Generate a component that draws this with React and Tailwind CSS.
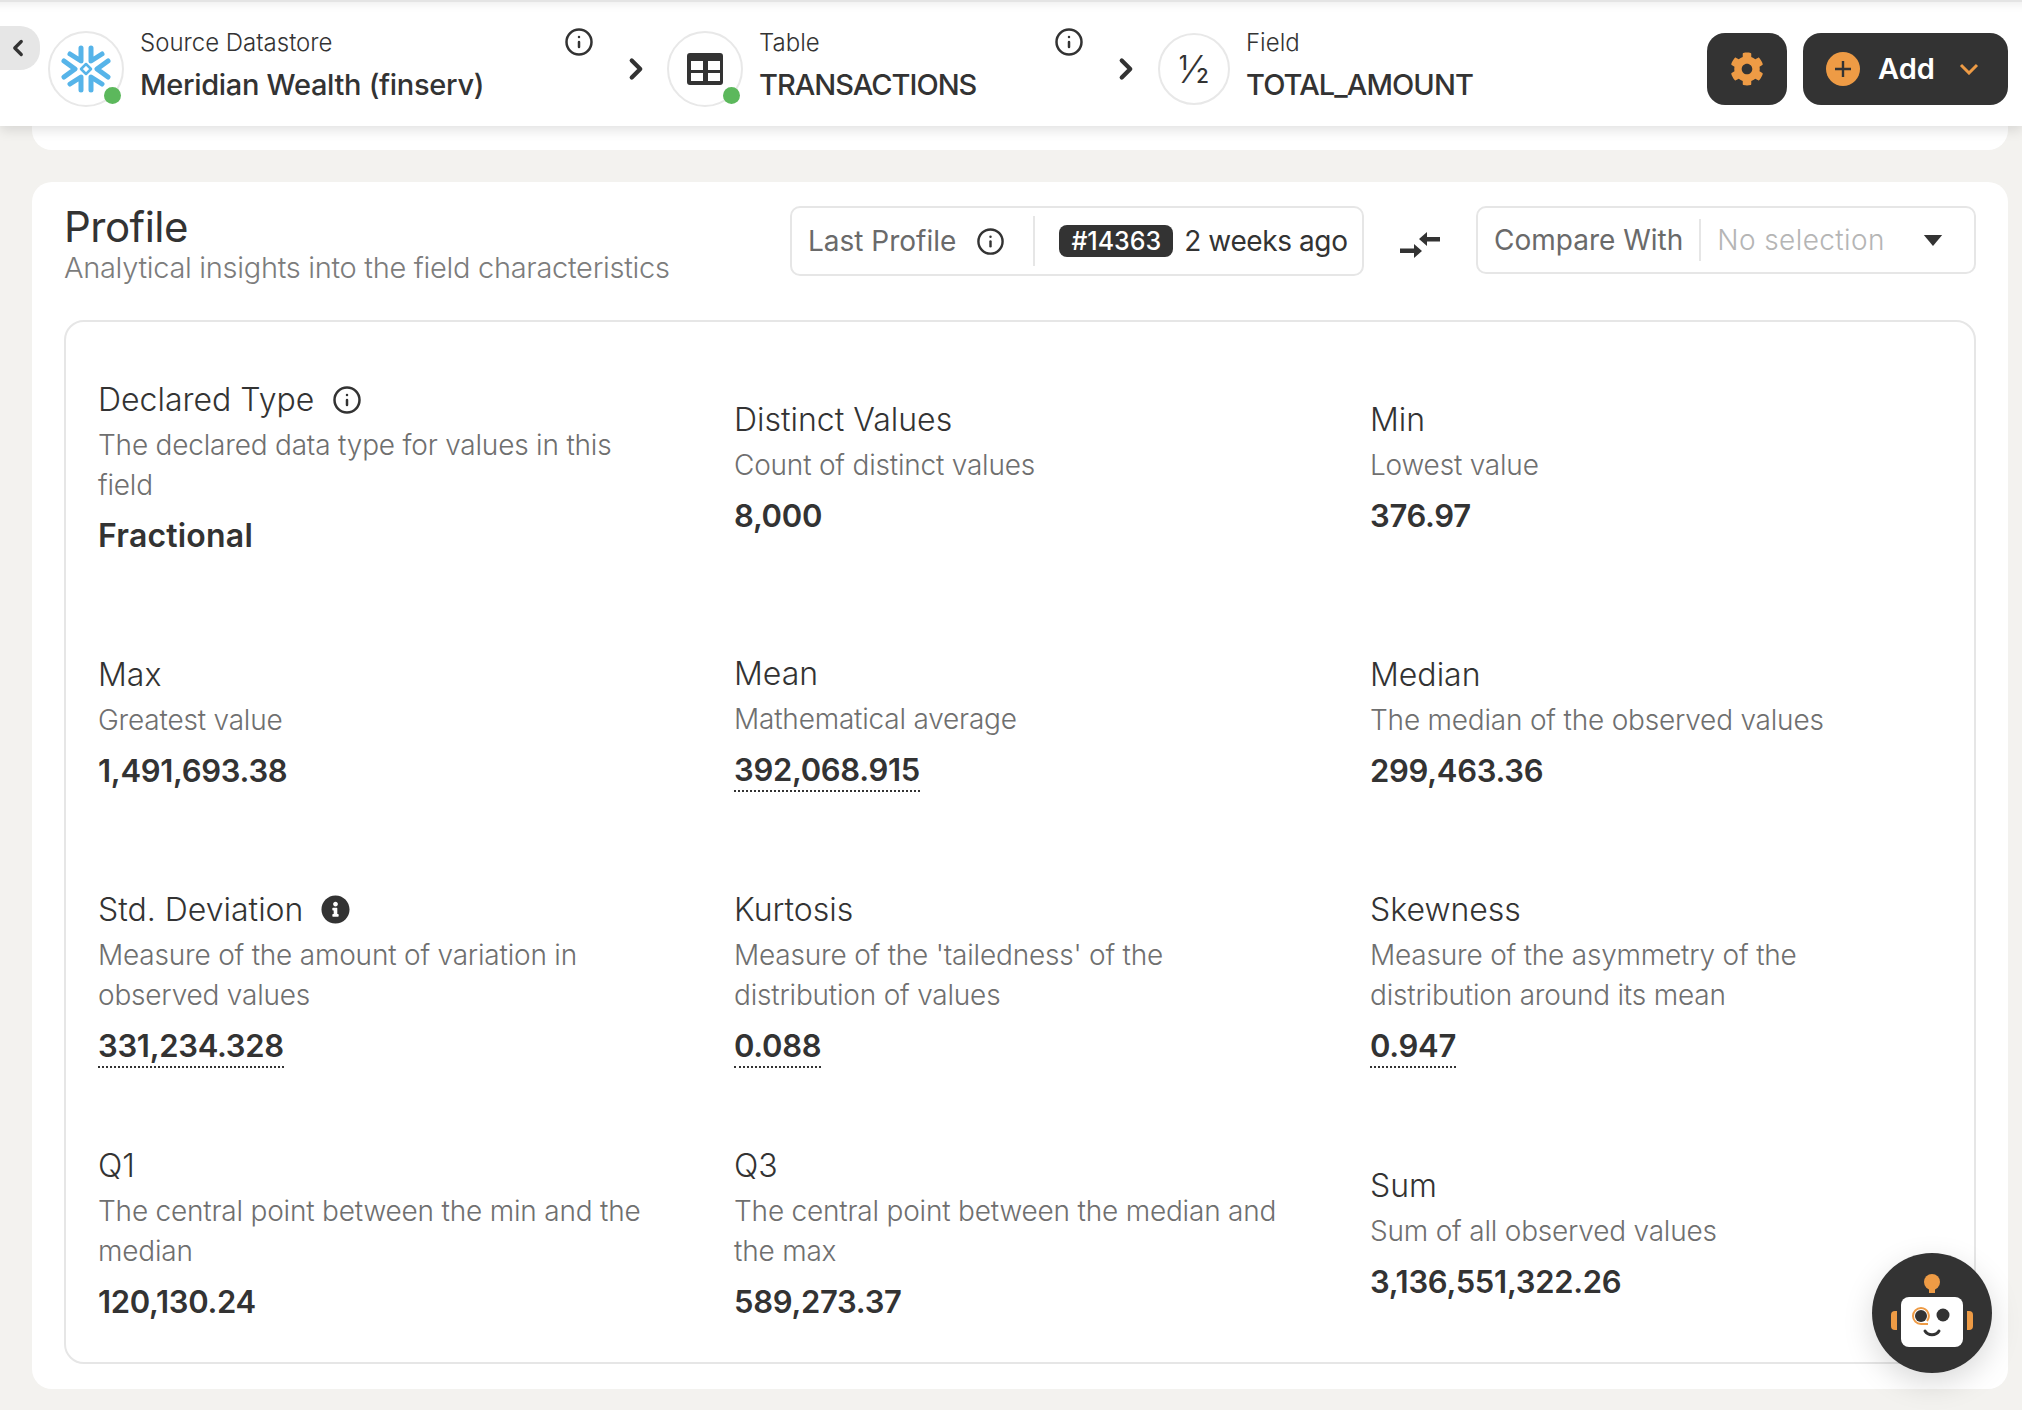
import { ChevronLeft, ChevronRight, Info } from 'lucide-react';
import { FaCog, FaInfoCircle } from 'react-icons/fa';

const FONT = "font-['Inter',sans-serif]";

const METRICS = [
  { label: 'Declared Type', desc: 'The declared data type for values in this field', value: 'Fractional', icon: 'outline', valueTone: 'text-[32px] tracking-[0.2px]' },
  { label: 'Distinct Values', desc: 'Count of distinct values', value: '8,000' },
  { label: 'Min', desc: 'Lowest value', value: '376.97' },
  { label: 'Max', desc: 'Greatest value', value: '1,491,693.38' },
  { label: 'Mean', desc: 'Mathematical average', value: '392,068.915', dotted: true },
  { label: 'Median', desc: 'The median of the observed values', value: '299,463.36' },
  { label: 'Std. Deviation', desc: 'Measure of the amount of variation in observed values', value: '331,234.328', icon: 'solid', dotted: true },
  { label: 'Kurtosis', desc: "Measure of the 'tailedness' of the distribution of values", value: '0.088', dotted: true },
  { label: 'Skewness', desc: 'Measure of the asymmetry of the distribution around its mean', value: '0.947', dotted: true },
  { label: 'Q1', desc: 'The central point between the min and the median', value: '120,130.24' },
  { label: 'Q3', desc: 'The central point between the median and the max', value: '589,273.37' },
  { label: 'Sum', desc: 'Sum of all observed values', value: '3,136,551,322.26' },
];

const SnowflakeIcon = () => (
  <svg viewBox="-25 -25 50 50" className="h-[50px] w-[50px]" fill="none" stroke="#56b4e9" strokeWidth="5" strokeLinecap="round" strokeLinejoin="round">
    <path d="M-5-21V-8L-16-15" />
    <path d="M5-21V-8L16-15" />
    <path d="M-5 21V8L-16 15" />
    <path d="M5 21V8L16 15" />
    <path d="M-22-8L-11 0L-22 8" />
    <path d="M22-8L11 0L22 8" />
    <path d="M0-5L5 0L0 5L-5 0Z" strokeWidth="2.5" />
  </svg>
);

const TableIcon = () => (
  <svg viewBox="0 0 36 32" className="h-[32px] w-[36px]" fill="#333">
    <path fillRule="evenodd" d="M3 0h30a3 3 0 0 1 3 3v26a3 3 0 0 1-3 3H3a3 3 0 0 1-3-3V3a3 3 0 0 1 3-3z M4 8v9h12V8z M21 8v9h12V8z M4 20v8h12v-8z M21 20v8h12v-8z" />
  </svg>
);

const CompareIcon = () => (
  <svg viewBox="0 0 40 26" className="h-[26px] w-[40px]" fill="#333">
    <path d="M19 7l8-7v5h13v4.500H27V14z" />
    <path d="M22 19l-8 7v-5H0v-4.500h14V12z" />
  </svg>
);

const PlusCircle = () => (
  <svg viewBox="0 0 34 34" className="h-[34px] w-[34px]">
    <circle cx="17" cy="17" r="17" fill="#ee9b45" />
    <path d="M17 9v16M9 17h16" stroke="#333" strokeWidth="2.4" />
  </svg>
);

const RobotIcon = () => (
  <svg viewBox="0 0 120 120" className="h-[120px] w-[120px]">
    <circle cx="60" cy="60" r="60" fill="#333" />
    <circle cx="60" cy="29" r="8" fill="#ee9b45" />
    <rect x="57" y="32" width="6" height="8" fill="#ee9b45" />
    <rect x="29" y="44" width="62" height="50" rx="8" fill="#fff" />
    <path d="M25 58h-2a4 4 0 0 0-4 4v11a4 4 0 0 0 4 4h2z" fill="#ee9b45" />
    <path d="M95 58h2a4 4 0 0 1 4 4v11a4 4 0 0 1-4 4h-2z" fill="#ee9b45" />
    <path d="M49 55a8 8 0 0 0 0 16h7" fill="none" stroke="#ee9b45" strokeWidth="2" />
    <path d="M49 55a8 8 0 0 1 6 13" fill="none" stroke="#ee9b45" strokeWidth="2" />
    <circle cx="49" cy="63" r="6" fill="#333" />
    <circle cx="71" cy="62" r="6.500" fill="#333" />
    <path d="M53 78c3 5 11 5 14 0" fill="none" stroke="#333" strokeWidth="3" strokeLinecap="round" />
  </svg>
);

const Crumb = ({ icon, label, value, width, online, info, size = 'h-[76px] w-[76px]', gap = 'ml-[16px]', valueTone = '' }) => (
  <div className="flex items-center">
    <div className={`relative flex shrink-0 items-center justify-center rounded-full border-2 border-[#e8e8e8] bg-white ${size}`}>
      {icon}
      {online && <span className="absolute bottom-[1px] right-[1px] h-[17px] w-[17px] rounded-full bg-[#5cb85c]" />}
    </div>
    <div className={`mb-[8px] flex flex-col ${gap} ${width}`}>
      <div className="flex items-start justify-between">
        <span className="text-[24px] leading-[32px] font-light text-[#333]">{label}</span>
        {info && <Info className="mr-[-2px] h-[30px] w-[30px] text-[#333]" strokeWidth={2} />}
      </div>
      <span className={`mt-[7px] text-[29px] leading-[38px] font-medium text-[#333] ${valueTone}`}>{value}</span>
    </div>
  </div>
);

const Metric = ({ label, desc, value, icon, dotted, valueTone = 'text-[31px] tracking-[-0.3px]' }) => (
  <div className="flex flex-col justify-center">
    <div className="flex items-center gap-[18px]">
      <span className="text-[32px] leading-[40px] font-light text-[#333]">{label}</span>
      {icon === 'outline' && <Info className="h-[30px] w-[30px] text-[#333]" strokeWidth={2} />}
      {icon === 'solid' && <FaInfoCircle className="h-[29px] w-[29px] text-[#333]" />}
    </div>
    <p className="mt-[5px] w-[546px] text-[28px] leading-[40px] font-light tracking-[-0.2px] text-[#6f6f6f]">{desc}</p>
    <div className="mt-[11px] flex">
      <span className={`leading-[40px] font-semibold text-[#333] ${valueTone} ${dotted ? 'border-b-2 border-dotted border-[#333]' : ''}`}>{value}</span>
    </div>
  </div>
);

export default function App() {
  return (
    <div className={`${FONT} relative h-[1410px] w-full overflow-hidden bg-[#f3f2ef]`}>
      <header className="relative z-10 flex h-[126px] items-center border-t-2 border-[#e4e4e4] bg-white pt-[10px] pr-[14px] shadow-[0_4px_12px_rgba(0,0,0,0.12),inset_0_12px_10px_-10px_rgba(0,0,0,0.08)]">
        <button className="mb-[42px] flex h-[44px] w-[40px] shrink-0 items-center justify-center rounded-r-[20px] bg-[#e6e6e6] pr-[4px]">
          <ChevronLeft className="h-[26px] w-[26px] text-[#333]" strokeWidth={3} />
        </button>
        <div className="ml-[8px] flex items-center">
          <Crumb icon={<SnowflakeIcon />} label="Source Datastore" value="Meridian Wealth (finserv)" width="w-[452px]" online info valueTone="tracking-[-0.3px]" />
          <ChevronRight className="ml-[27px] mr-[14px] h-[34px] w-[34px] text-[#333]" strokeWidth={3} />
          <Crumb icon={<TableIcon />} label="Table" value="TRANSACTIONS" width="w-[323px]" online info valueTone="tracking-[-1px]" />
          <ChevronRight className="ml-[27px] mr-[15px] h-[34px] w-[34px] text-[#333]" strokeWidth={3} />
          <Crumb icon={<span className="text-[38px] font-light text-[#333]">½</span>} label="Field" value="TOTAL_AMOUNT" width="w-[240px]" size="h-[72px] w-[72px]" gap="ml-[16px]" valueTone="tracking-[-0.9px]" />
        </div>
        <div className="ml-auto flex items-center gap-[16px]">
          <button className="flex h-[72px] w-[80px] items-center justify-center rounded-[18px] bg-[#333]">
            <FaCog className="h-[34px] w-[34px] text-[#ee9b45]" />
          </button>
          <button className="flex h-[72px] w-[205px] items-center rounded-[18px] bg-[#333] pl-[23px]">
            <PlusCircle />
            <span className="ml-[18px] text-[29px] font-semibold text-white">Add</span>
            <svg viewBox="0 0 20 12" className="ml-[24px] h-[12px] w-[20px]" fill="none" stroke="#ee9b45" strokeWidth="3"><path d="M2 2l8 8 8-8" /></svg>
          </button>
        </div>
      </header>

      <div className="mr-[14px] ml-[32px] -mt-[4px] h-[28px] rounded-b-[20px] bg-white" />

      <section className="mt-[32px] mr-[14px] ml-[32px] h-[1207px] rounded-[20px] bg-white px-[32px] pt-[23px]">
        <div className="flex h-[115px] items-start justify-between">
          <div>
            <h1 className="text-[42px] leading-[44px] font-normal tracking-[-0.5px] text-[#333]">Profile</h1>
            <p className="mt-[1px] text-[29px] leading-[36px] font-light tracking-[-0.3px] text-[#7c7c7c]">Analytical insights into the field characteristics</p>
          </div>
          <div className="mt-[1px] flex items-start">
            <div className="flex h-[70px] w-[574px] items-center rounded-[10px] border-2 border-[#e6e6e6] pl-[16px] whitespace-nowrap">
              <span className="text-[28px] text-[#6a6a6a]">Last Profile</span>
              <Info className="ml-[20px] h-[29px] w-[29px] shrink-0 text-[#333]" strokeWidth={2} />
              <span className="mr-[24px] ml-[28px] h-[50px] w-[2px] shrink-0 bg-[#e6e6e6]" />
              <span className="rounded-[8px] bg-[#333] px-[12px] text-[25px] leading-[32px] font-medium text-white">#14363</span>
              <span className="ml-[11px] text-[28px] tracking-[-0.4px] text-[#333]">2 weeks ago</span>
            </div>
            <span className="mx-[36px] mt-[26px] flex"><CompareIcon /></span>
            <div className="flex h-[68px] w-[500px] items-center rounded-[10px] border-2 border-[#e6e6e6] pl-[16px] whitespace-nowrap">
              <span className="text-[28px] text-[#6a6a6a]">Compare With</span>
              <span className="mx-[16px] h-[42px] w-[2px] shrink-0 bg-[#e6e6e6]" />
              <span className="text-[28px] font-light tracking-[0.4px] text-[#b5b5b5]">No selection</span>
              <svg viewBox="0 0 20 12" className="ml-[38px] h-[11px] w-[20px]" fill="#333"><path d="M0 0h20L10 12z" /></svg>
            </div>
          </div>
        </div>
        <div className="grid h-[1044px] grid-cols-[636px_636px_1fr] grid-rows-4 rounded-[20px] border-2 border-[#e6e6e6] pt-[18px] pl-[32px]">
          {METRICS.map((m) => (
            <Metric key={m.label} {...m} />
          ))}
        </div>
      </section>

      <div className="absolute top-[1253px] left-[1872px] z-20 rounded-full shadow-[0_10px_30px_rgba(0,0,0,0.15)]">
        <RobotIcon />
      </div>
    </div>
  );
}
